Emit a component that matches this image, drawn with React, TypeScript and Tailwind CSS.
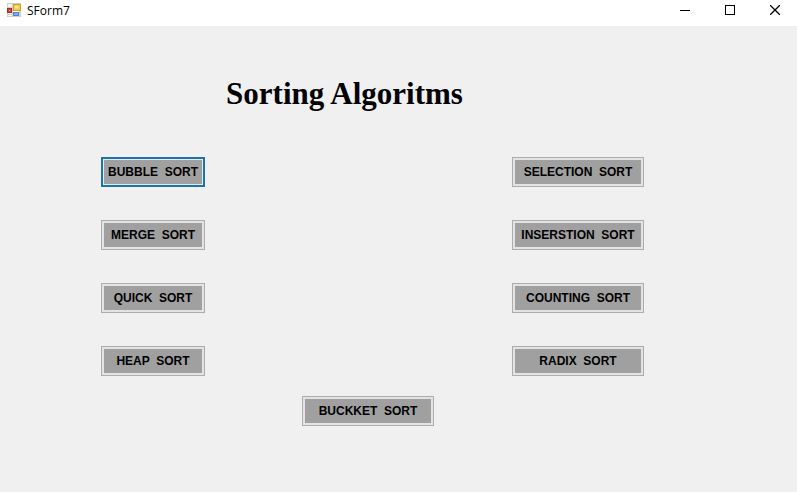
const leftSorts = ["BUBBLE  SORT", "MERGE  SORT", "QUICK  SORT", "HEAP  SORT"];
const rightSorts = ["SELECTION  SORT", "INSERSTION  SORT", "COUNTING  SORT", "RADIX  SORT"];

function SortButton({ label, wide = false, selected = false }: { label: string; wide?: boolean; selected?: boolean }) {
  const width = wide ? "w-[132px]" : "w-[104px]";
  const frame = selected
    ? "border-2 border-[#2172ab] p-px bg-[#d5f0fb]"
    : "border border-[#adadad] p-0.5 bg-[#e3e3e3]";
  return (
    <button type="button" className={`flex h-[30px] ${width} ${frame}`}>
      <span className="flex h-full w-full items-center justify-center whitespace-pre bg-[#a0a0a0] text-[12px] leading-4 font-bold text-black">
        {label}
      </span>
    </button>
  );
}

function FormIcon() {
  return (
    <svg width="14" height="14" viewBox="0 0 14 14" aria-hidden="true">
      <rect x="0.5" y="0.5" width="13" height="13" fill="#f4f4f2" stroke="#cfcfca" />
      <path d="M5.5 1v12M1 4.5h5M1 11.5h5M12.5 8v5" stroke="#d0d0cc" fill="none" />
      <rect x="6.5" y="1.5" width="7" height="6" fill="#f8cf4a" stroke="#cf9f2c" />
      <rect x="8" y="3" width="3" height="2" fill="#ffeb98" />
      <rect x="0.5" y="5.5" width="4" height="4" fill="#d2463a" stroke="#a92a22" />
      <rect x="2" y="7" width="1" height="1" fill="#f1a08f" />
      <rect x="6.5" y="9.5" width="5" height="3" fill="#79aef5" stroke="#4b83d6" />
    </svg>
  );
}

export default function App() {
  return (
    <div className="min-h-screen bg-[#f0f0f0] font-['Liberation_Sans',Arial,sans-serif] text-black">
      <header className="flex h-[26px] items-start justify-between bg-white">
        <div className="flex items-start gap-1.5 pt-[3px] pl-[7px] font-['Open_Sans','Segoe_UI',sans-serif] text-[12px] leading-4">
          <FormIcon />
          <span>SForm7</span>
        </div>
        <div className="flex h-5">
          <button type="button" aria-label="Minimize" className="flex w-[45px] items-center justify-center">
            <svg width="10" height="10" viewBox="0 0 10 10"><path d="M0 5.5h10" stroke="#000" /></svg>
          </button>
          <button type="button" aria-label="Maximize" className="flex w-[45px] items-center justify-center">
            <svg width="10" height="10" viewBox="0 0 10 10"><rect x="0.5" y="0.5" width="9" height="9" fill="none" stroke="#000" /></svg>
          </button>
          <button type="button" aria-label="Close" className="flex w-[45px] items-center justify-center">
            <svg width="10" height="10" viewBox="0 0 10 10"><path d="M0 0l10 10M10 0L0 10" stroke="#000" strokeWidth="1.3" /></svg>
          </button>
        </div>
      </header>
      <main className="pt-12 pr-[153px] pl-[101px]">
        <h1 className="pr-14 text-center font-['Palatino_Linotype','Liberation_Serif',serif] text-[31px] leading-10 font-bold">
          Sorting Algoritms
        </h1>
        <div className="mt-[43px] flex justify-between">
          <div className="flex flex-col gap-[33px]">
            {leftSorts.map((label, i) => (
              <SortButton key={label} label={label} selected={i === 0} />
            ))}
          </div>
          <div className="flex flex-col gap-[33px]">
            {rightSorts.map((label) => (
              <SortButton key={label} label={label} wide />
            ))}
          </div>
        </div>
        <div className="mt-5 flex justify-center pr-[9px]">
          <SortButton label="BUCKKET  SORT" wide />
        </div>
      </main>
    </div>
  );
}
